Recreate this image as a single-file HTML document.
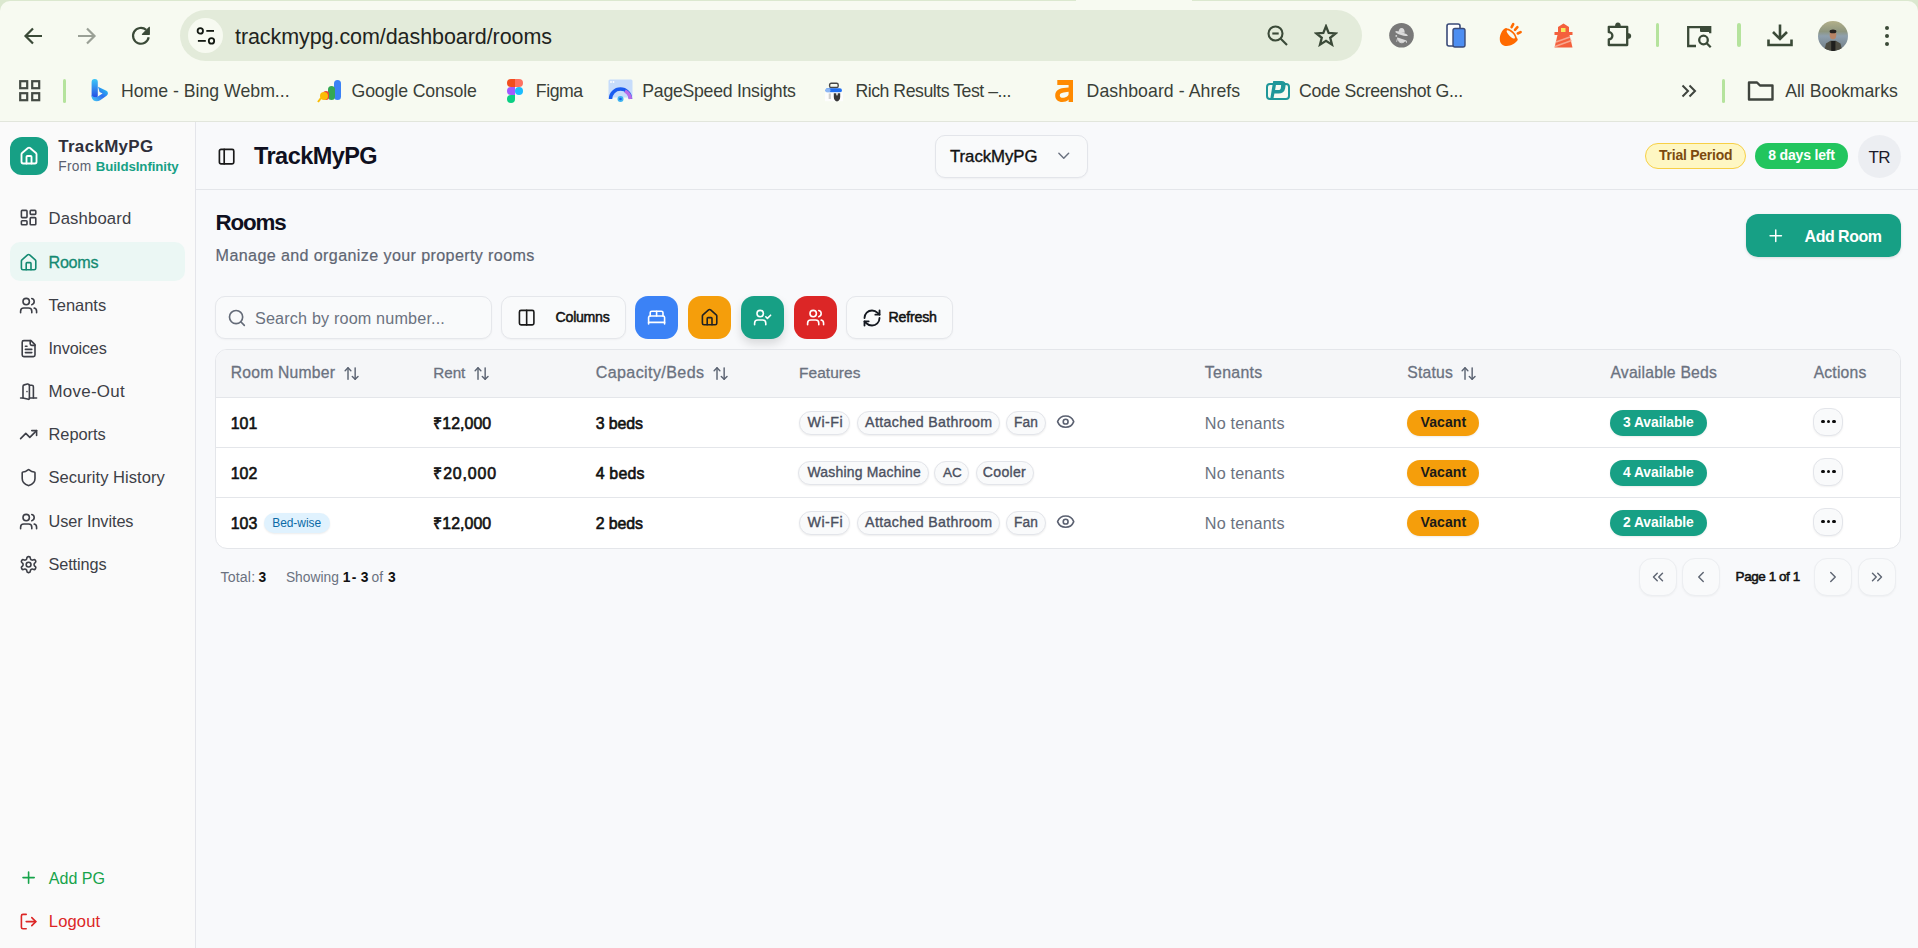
<!DOCTYPE html>
<html><head><meta charset="utf-8"><title>TrackMyPG - Rooms</title>
<style>
html,body{margin:0;padding:0;}
body{width:1918px;height:948px;position:relative;overflow:hidden;background:#f8f9fb;font-family:"Liberation Sans",sans-serif;}
.t{position:absolute;white-space:nowrap;}
svg{display:block}
</style></head><body>
<div style="position:absolute;left:0px;top:0px;width:1918px;height:122px;background:#dbe8cf;"></div>
<div style="position:absolute;left:0px;top:1px;width:1918px;height:120px;background:#f7faf1;border-radius:10px 10px 0 0;"></div>
<div style="position:absolute;left:0px;top:121px;width:1918px;height:1px;background:#e2e6dc;"></div>
<div style="position:absolute;left:1076px;top:0px;width:116px;height:1px;background:#f7faf1;"></div>
<div style="position:absolute;left:180px;top:10px;width:1182px;height:51px;background:#e3ebda;border-radius:26px;"></div>
<div style="position:absolute;left:187.6px;top:17.6px;width:35.599999999999994px;height:35.8px;background:#f7faf1;border-radius:50%;"></div>
<svg style="position:absolute;left:22px;top:25px" width="22" height="22" viewBox="0 0 22 22" fill="none" stroke="#3b4a38" stroke-width="2.2"><path d="M20 11H4M11 3.5L3.5 11 11 18.5"/></svg>
<svg style="position:absolute;left:76px;top:25px" width="22" height="22" viewBox="0 0 22 22" fill="none" stroke="#9aa096" stroke-width="2.2"><path d="M2 11h16M11 3.5L18.5 11 11 18.5"/></svg>
<svg style="position:absolute;left:130px;top:25px" width="22" height="22" viewBox="0 0 22 22"><path d="M18.7 12.3A7.9 7.9 0 1 1 16.2 4.9" fill="none" stroke="#3b4a38" stroke-width="2.2"/><path d="M19.3 2.3V9.3H12.4Z" fill="#3b4a38" stroke="#3b4a38" stroke-width="1.2" stroke-linejoin="round"/></svg>
<svg style="position:absolute;left:195px;top:25px" width="22" height="22" viewBox="0 0 22 22" fill="none" stroke="#141a13" stroke-width="1.8"><circle cx="5.3" cy="5.9" r="2.7"/><path d="M11.3 5.9H19"/><circle cx="16.5" cy="15.9" r="2.7"/><path d="M2.9 15.9H10.8"/></svg>
<div class="t" style="left:235.00px;top:27.00px;font-size:21.50px;line-height:21.50px;letter-spacing:-0.073px;color:#1f241d;">trackmypg.com/dashboard/rooms</div>
<svg style="position:absolute;left:1266px;top:24px" width="24" height="24" viewBox="0 0 24 24" fill="none" stroke="#3b4a38" stroke-width="2.1"><circle cx="9.5" cy="9.5" r="7"/><path d="M14.5 14.5L21 21"/><path d="M6.3 9.5h6.4"/></svg>
<svg style="position:absolute;left:1314px;top:24px" width="24" height="23" viewBox="0 0 26 25" fill="none" stroke="#3b4a38" stroke-width="2.5" stroke-linejoin="miter"><path d="M13 2.5l2.9 7.2 7.6.5-5.9 4.8 1.9 7.4L13 18.3l-6.5 4.1 1.9-7.4-5.9-4.8 7.6-.5z"/></svg>
<svg style="position:absolute;left:1389px;top:23px" width="25" height="25" viewBox="0 0 25 25"><circle cx="12.5" cy="12.3" r="12.3" fill="#797979"/><path d="M9.6 9.5C9.6 6.5 10.6 5 12.6 5S15.7 6.5 15.7 9.8Z" fill="#dadada"/><ellipse cx="12.5" cy="10.6" rx="6.6" ry="1.5" transform="rotate(18 12.5 10.6)" fill="#dadada"/><path d="M8.8 14.3C8.6 17.8 10.2 19.8 12.7 19.8S16.6 18 16.6 15.6L17.5 19.5 16 15.9Z M8.8 14.3L7.6 18.8" fill="#dadada" stroke="#dadada" stroke-width="0.8"/><path d="M5.2 12.2L20.2 17.2" stroke="#797979" stroke-width="2"/><circle cx="7.3" cy="12.9" r="0.9" fill="#dadada"/></svg>
<svg style="position:absolute;left:1446px;top:23px" width="20" height="25" viewBox="0 0 20 25"><rect x="1" y="1" width="13" height="22" rx="2" fill="#fff" stroke="#3a4a78" stroke-width="1.6"/><rect x="7" y="5.5" width="12" height="18.5" rx="2" fill="#4d8ef2" stroke="#3a4a78" stroke-width="1.4"/></svg>
<svg style="position:absolute;left:1494px;top:18px" width="34" height="34" viewBox="0 0 34 34"><path d="M10.8 10.6C8 12.5 5.6 17 5.8 21.5c.2 4 3 6.8 7 6.6 4.2-.2 8.5-2.5 10.6-5.5 .6-.9.3-1.6-.2-2.3L12.8 10.4c-.6-.5-1.3-.4-2 .2z" fill="#ff6a00"/><ellipse cx="16.8" cy="16.4" rx="7.6" ry="3.6" transform="rotate(45 16.8 16.4)" fill="#ff6a00"/><ellipse cx="16.8" cy="16.4" rx="5.6" ry="1.9" transform="rotate(45 16.8 16.4)" fill="#f6f9f0"/><path d="M17.6 9.2l1.6-3M21 11.8l2.4-2.6M23.8 15.5l2.8-1.4" stroke="#ff6a00" stroke-width="2.6" stroke-linecap="round"/></svg>
<svg style="position:absolute;left:1554px;top:23px" width="19" height="25" viewBox="0 0 19 25"><path d="M9.5 0.5L4 4v5h11V4z" fill="#f4603d"/><rect x="7" y="5" width="4.5" height="4" fill="#f6e85a"/><rect x="0.5" y="9" width="18" height="3" fill="#f4603d"/><path d="M3.5 12h12l3 12.5H0.5z" fill="#f4603d"/><path d="M2 19l14-5M1 23.5l16.5-6" stroke="#f7a890" stroke-width="1.6"/></svg>
<svg style="position:absolute;left:1600px;top:18px" width="40" height="34" viewBox="0 0 40 34"><path d="M8.8 8.8H27.2V27H8.8V21.4A3.6 3.6 0 0 0 8.8 14.2Z" fill="none" stroke="#3b4a38" stroke-width="2.3" stroke-linejoin="round"/><path d="M15 8.8A2.9 4.2 0 0 1 20.8 8.8Z" fill="#3b4a38"/><path d="M27.2 15A4 2.9 0 0 1 27.2 20.8Z" fill="#3b4a38"/></svg>
<div style="position:absolute;left:1656px;top:23px;width:3px;height:24px;background:#b5e39d;border-radius:2px;"></div>
<svg style="position:absolute;left:1686px;top:25px" width="27" height="23" viewBox="0 0 27 23" fill="none" stroke="#3b4a38" stroke-width="2.3"><path d="M10 21H2.2V2.2h22v6"/><rect x="14" y="1" width="11" height="6" fill="#3b4a38" stroke="none" rx="1"/><circle cx="17.5" cy="15" r="4.3"/><path d="M20.7 18.2l4 4"/></svg>
<div style="position:absolute;left:1737px;top:23px;width:3.5px;height:24px;background:#b5e39d;border-radius:2px;"></div>
<svg style="position:absolute;left:1767px;top:24px" width="26" height="24" viewBox="0 0 26 24" fill="none" stroke="#3b4a38" stroke-width="2.6"><path d="M13 0.5v14M6 8l7 7 7-7"/><path d="M1.5 15.5v5.5h23v-5.5"/></svg>
<svg style="position:absolute;left:1818px;top:21px" width="30" height="30" viewBox="0 0 30 30"><defs><clipPath id="av"><circle cx="15" cy="15" r="15"/></clipPath><linearGradient id="avg" x1="0" y1="0" x2="0" y2="1"><stop offset="0" stop-color="#b3b08a"/><stop offset="0.35" stop-color="#8e9680"/><stop offset="0.5" stop-color="#8fa0ad"/><stop offset="1" stop-color="#6d7a82"/></linearGradient></defs><g clip-path="url(#av)"><rect width="30" height="30" fill="url(#avg)"/><ellipse cx="15" cy="14" rx="3.3" ry="4.2" fill="#b88466"/><ellipse cx="15" cy="10.4" rx="3.4" ry="1.9" fill="#26221f"/><path d="M6 31L8 22.5 12.5 19.8H17.8L22.5 22.5 24.5 31Z" fill="#4d4c42"/><rect x="13.2" y="20" width="4.2" height="11" fill="#1f1f1d"/></g></svg>
<div style="position:absolute;left:1885px;top:25.6px;width:4px;height:4.0px;background:#3b4a38;border-radius:50%;"></div>
<div style="position:absolute;left:1885px;top:33.9px;width:4px;height:4.0px;background:#3b4a38;border-radius:50%;"></div>
<div style="position:absolute;left:1885px;top:42.1px;width:4px;height:4.0px;background:#3b4a38;border-radius:50%;"></div>
<svg style="position:absolute;left:19px;top:80px" width="22" height="22" viewBox="0 0 22 22" fill="none" stroke="#444b44" stroke-width="2.2"><rect x="1.2" y="1.2" width="7" height="7"/><rect x="13.2" y="1.2" width="7" height="7"/><rect x="1.2" y="13.2" width="7" height="7"/><rect x="13.2" y="13.2" width="7" height="7"/></svg>
<div style="position:absolute;left:63px;top:79px;width:3px;height:23.5px;background:#b5e39d;border-radius:2px;"></div>
<div class="t" style="left:121.00px;top:83.00px;font-size:17.70px;line-height:17.70px;letter-spacing:-0.009px;color:#3a3f38;">Home - Bing Webm...</div>
<div class="t" style="left:351.50px;top:83.00px;font-size:17.70px;line-height:17.70px;letter-spacing:-0.110px;color:#3a3f38;">Google Console</div>
<div class="t" style="left:535.80px;top:83.00px;font-size:17.70px;line-height:17.70px;letter-spacing:-0.447px;color:#3a3f38;">Figma</div>
<div class="t" style="left:642.30px;top:83.00px;font-size:17.70px;line-height:17.70px;letter-spacing:-0.278px;color:#3a3f38;">PageSpeed Insights</div>
<div class="t" style="left:855.40px;top:83.00px;font-size:17.70px;line-height:17.70px;letter-spacing:-0.468px;color:#3a3f38;">Rich Results Test –...</div>
<div class="t" style="left:1086.60px;top:83.00px;font-size:17.70px;line-height:17.70px;letter-spacing:0.070px;color:#3a3f38;">Dashboard - Ahrefs</div>
<div class="t" style="left:1299.00px;top:83.00px;font-size:17.70px;line-height:17.70px;letter-spacing:-0.316px;color:#3a3f38;">Code Screenshot G...</div>
<div class="t" style="left:1785.20px;top:83.00px;font-size:17.70px;line-height:17.70px;letter-spacing:-0.027px;color:#3a3f38;">All Bookmarks</div>
<svg style="position:absolute;left:91px;top:78px" width="18" height="26" viewBox="0 0 18 26"><defs><linearGradient id="bg1" x1="0" y1="0" x2="0" y2="1"><stop offset="0" stop-color="#3cc8f7"/><stop offset="1" stop-color="#2546e3"/></linearGradient><linearGradient id="bg2" x1="1" y1="0" x2="0" y2="1"><stop offset="0" stop-color="#22d3f0"/><stop offset="0.5" stop-color="#2f6ff0"/><stop offset="1" stop-color="#45d0f5"/></linearGradient></defs><rect x="0.6" y="1" width="6.2" height="19.5" rx="3" fill="url(#bg1)"/><path d="M7 8.8L15.4 12.8C17.4 13.8 17.5 16.6 15.6 17.8L9.2 22.2C5.6 24.6 1.2 23 0.6 19V17.2C2.3 19.3 5 19.6 7.2 18.2L11.6 15.4L8.6 14Z" fill="url(#bg2)"/></svg>
<svg style="position:absolute;left:317px;top:79px" width="26" height="24" viewBox="0 0 26 24"><rect x="17" y="1" width="7" height="20" rx="3.5" fill="#3b82f6"/><rect x="11" y="7" width="7" height="14" rx="3.5" fill="#34a853"/><rect x="6" y="12" width="6" height="9" rx="3" fill="#ea4335"/><circle cx="7" cy="17" r="4" fill="#fbbc04"/><path d="M4 19l-3 4" stroke="#fbbc04" stroke-width="2"/></svg>
<svg style="position:absolute;left:507px;top:79px" width="16" height="24" viewBox="0 0 16 24"><path d="M4 0h4v8H4a4 4 0 0 1 0-8z" fill="#f24e1e"/><path d="M8 0h4a4 4 0 0 1 0 8H8z" fill="#ff7262"/><path d="M4 8h4v8H4a4 4 0 0 1 0-8z" fill="#a259ff"/><circle cx="12" cy="12" r="4" fill="#1abcfe"/><path d="M4 16h4v4a4 4 0 1 1-4-4z" fill="#0acf83"/></svg>
<svg style="position:absolute;left:608px;top:79px" width="25" height="24" viewBox="0 0 25 24"><rect x="0.5" y="0.5" width="24" height="18" rx="1.5" fill="#c6dcfb"/><circle cx="3" cy="3" r="0.9" fill="#fff"/><circle cx="5.5" cy="3" r="0.9" fill="#fff"/><path d="M2.5 20a10 10 0 0 1 20 0" fill="none" stroke="#1a5cf0" stroke-width="3.5"/><path d="M17 12a10 10 0 0 1 5.5 8" fill="none" stroke="#b76be8" stroke-width="3.5"/><circle cx="12.5" cy="20" r="3" fill="#3fb4f0"/><circle cx="12.5" cy="20" r="1.3" fill="#1a5cf0"/></svg>
<svg style="position:absolute;left:824px;top:82px" width="20" height="20" viewBox="0 0 20 20"><rect x="5.6" y="1.3" width="8.6" height="4.2" rx="1.6" fill="none" stroke="#474747" stroke-width="1.4"/><rect x="1.5" y="6.2" width="16.4" height="4.2" rx="2" fill="#1f6ff2"/><rect x="1.5" y="6.2" width="5" height="4.2" rx="2" fill="#8cb6f4"/><rect x="1" y="10.4" width="18" height="8.8" fill="#fdfdfd"/><rect x="4.7" y="11.4" width="2.2" height="5.6" fill="#cfcfcf"/><path d="M9.8 11.3h6.4v3.6c0 2.4-1.4 4-3.2 4.5-1.8-.5-3.2-2.1-3.2-4.5z" fill="#383838"/><path d="M11.8 11.3l1.2 2.6 1.2-2.6z" fill="#fdfdfd"/></svg>
<svg style="position:absolute;left:1055px;top:80px" width="19" height="22" viewBox="0 0 19 22"><path d="M2.3 0H18V22H13.6V19.6C12 21.4 9.8 22 7.3 22 3 22 .2 19.5.2 15.5.2 11 3.5 8.6 8.5 8.1L13.6 7.4V4.9H2.3Z M13.6 11.8L8.6 12.5C6 12.9 4.8 13.8 4.8 15.4 4.8 16.9 6 17.8 7.8 17.8 10.8 17.8 13.6 16 13.6 14Z" fill="#ff8a00" fill-rule="evenodd"/></svg>
<svg style="position:absolute;left:1266px;top:81px" width="24" height="19" viewBox="0 0 24 19"><rect x="1" y="3" width="22" height="15" rx="3" fill="none" stroke="#1f9799" stroke-width="2"/><path d="M7.2 0H15.5C18.6 0 20.1 1.6 19.6 4.6L19.1 7.4C18.5 10.7 16.1 12.6 12.6 12.6H8.4L7.2 18.8H4.1Z M9.1 9H12.6C13.8 9 14.6 8.4 14.8 7.2L15.1 5.3C15.3 4.2 14.9 3.6 13.9 3.6H10Z" fill="#1f9799" fill-rule="evenodd"/></svg>
<svg style="position:absolute;left:1681px;top:84px" width="16" height="14" viewBox="0 0 16 14" fill="none" stroke="#3f443e" stroke-width="2"><path d="M1.5 1.5l5.5 5.5-5.5 5.5M8.5 1.5L14 7l-5.5 5.5"/></svg>
<div style="position:absolute;left:1722px;top:79px;width:3.2999999999999545px;height:23.700000000000003px;background:#b5e39d;border-radius:2px;"></div>
<svg style="position:absolute;left:1747px;top:80px" width="28" height="22" viewBox="0 0 28 22" fill="none" stroke="#3f443e" stroke-width="2.4" stroke-linejoin="round"><path d="M2 2.5h8l3 3h12.5v14H2z"/></svg>
<div style="position:absolute;left:0px;top:122px;width:195px;height:826px;background:#fafafa;"></div>
<div style="position:absolute;left:195px;top:122px;width:1px;height:826px;background:#e4e5ea;"></div>
<div style="position:absolute;left:196px;top:122px;width:1722px;height:826px;background:#f8f9fb;"></div>
<div style="position:absolute;left:196px;top:189px;width:1722px;height:1px;background:#e4e6ea;"></div>
<div style="position:absolute;left:10px;top:137px;width:38px;height:38px;background:#17a085;border-radius:12px;"></div>
<svg style="position:absolute;left:18.63px;top:145.93px;" width="20.04" height="20.04" viewBox="0 0 24 24" fill="none" stroke="#fff" stroke-width="2.2" stroke-linecap="round" stroke-linejoin="round"><path d="M15 21v-8a1 1 0 0 0-1-1h-4a1 1 0 0 0-1 1v8"/><path d="M3 10a2 2 0 0 1 .709-1.528l7-5.999a2 2 0 0 1 2.582 0l7 5.999A2 2 0 0 1 21 10v9a2 2 0 0 1-2 2H5a2 2 0 0 1-2-2z"/></svg>
<div class="t" style="left:58.20px;top:139.00px;font-size:16.97px;line-height:16.97px;letter-spacing:0.333px;color:#2f2f3a;font-weight:700;">TrackMyPG</div>
<div class="t" style="left:58.20px;top:160.00px;font-size:13.78px;line-height:13.78px;letter-spacing:0.287px;color:#5b6170;">From</div>
<div class="t" style="left:95.70px;top:160.00px;font-size:13.26px;line-height:13.26px;letter-spacing:-0.070px;color:#17a085;font-weight:700;">BuildsInfinity</div>
<div style="position:absolute;left:10px;top:242px;width:175px;height:39px;background:#ebf7f4;border-radius:10px;"></div>
<div class="t" style="left:48.50px;top:211.00px;font-size:16.70px;line-height:16.70px;letter-spacing:0.136px;color:#3d3f47;">Dashboard</div>
<svg style="position:absolute;left:19.0px;top:208.4px;" width="19.2" height="19.2" viewBox="0 0 24 24" fill="none" stroke="#3d3f47" stroke-width="2" stroke-linecap="round" stroke-linejoin="round"><rect width="7" height="9" x="3" y="3" rx="1"/><rect width="7" height="5" x="14" y="3" rx="1"/><rect width="7" height="9" x="14" y="12" rx="1"/><rect width="7" height="5" x="3" y="16" rx="1"/></svg>
<div class="t" style="left:48.50px;top:254.00px;font-size:16.15px;line-height:16.15px;letter-spacing:-0.264px;color:#148a72;-webkit-text-stroke:0.3px #148a72;">Rooms</div>
<svg style="position:absolute;left:19.0px;top:252.50000000000003px;" width="19.2" height="19.2" viewBox="0 0 24 24" fill="none" stroke="#148a72" stroke-width="2" stroke-linecap="round" stroke-linejoin="round"><path d="M15 21v-8a1 1 0 0 0-1-1h-4a1 1 0 0 0-1 1v8"/><path d="M3 10a2 2 0 0 1 .709-1.528l7-5.999a2 2 0 0 1 2.582 0l7 5.999A2 2 0 0 1 21 10v9a2 2 0 0 1-2 2H5a2 2 0 0 1-2-2z"/></svg>
<div class="t" style="left:48.50px;top:297.00px;font-size:16.48px;line-height:16.48px;letter-spacing:-0.001px;color:#3d3f47;">Tenants</div>
<svg style="position:absolute;left:19.0px;top:295.59999999999997px;" width="19.2" height="19.2" viewBox="0 0 24 24" fill="none" stroke="#3d3f47" stroke-width="2" stroke-linecap="round" stroke-linejoin="round"><path d="M16 21v-2a4 4 0 0 0-4-4H6a4 4 0 0 0-4 4v2"/><path d="M16 3.128a4 4 0 0 1 0 7.744"/><path d="M22 21v-2a4 4 0 0 0-3-3.87"/><circle cx="9" cy="7" r="4"/></svg>
<div class="t" style="left:48.50px;top:340.00px;font-size:16.19px;line-height:16.19px;letter-spacing:-0.154px;color:#3d3f47;">Invoices</div>
<svg style="position:absolute;left:19.0px;top:338.59999999999997px;" width="19.2" height="19.2" viewBox="0 0 24 24" fill="none" stroke="#3d3f47" stroke-width="2" stroke-linecap="round" stroke-linejoin="round"><path d="M15 2H6a2 2 0 0 0-2 2v16a2 2 0 0 0 2 2h12a2 2 0 0 0 2-2V7Z"/><path d="M14 2v4a2 2 0 0 0 2 2h4"/><path d="M10 9H8"/><path d="M16 13H8"/><path d="M16 17H8"/></svg>
<div class="t" style="left:48.50px;top:384.00px;font-size:16.91px;line-height:16.91px;letter-spacing:0.268px;color:#3d3f47;">Move-Out</div>
<svg style="position:absolute;left:19.0px;top:381.7px;" width="19.2" height="19.2" viewBox="0 0 24 24" fill="none" stroke="#3d3f47" stroke-width="2" stroke-linecap="round" stroke-linejoin="round"><path d="M13 4h3a2 2 0 0 1 2 2v14"/><path d="M2 20h3"/><path d="M13 20h9"/><path d="M10 12v.01"/><path d="M13 4.562v16.157a1 1 0 0 1-1.242.97L5 20V5.562a2 2 0 0 1 1.515-1.94l4-1A2 2 0 0 1 13 4.561Z"/></svg>
<div class="t" style="left:48.50px;top:426.00px;font-size:16.42px;line-height:16.42px;letter-spacing:-0.033px;color:#3d3f47;">Reports</div>
<svg style="position:absolute;left:19.0px;top:424.7px;" width="19.2" height="19.2" viewBox="0 0 24 24" fill="none" stroke="#3d3f47" stroke-width="2" stroke-linecap="round" stroke-linejoin="round"><polyline points="22 7 13.5 15.5 8.5 10.5 2 17"/><polyline points="16 7 22 7 22 13"/></svg>
<div class="t" style="left:48.50px;top:470.00px;font-size:16.54px;line-height:16.54px;letter-spacing:0.030px;color:#3d3f47;">Security History</div>
<svg style="position:absolute;left:19.0px;top:467.7px;" width="19.2" height="19.2" viewBox="0 0 24 24" fill="none" stroke="#3d3f47" stroke-width="2" stroke-linecap="round" stroke-linejoin="round"><path d="M20 13c0 5-3.5 7.5-7.66 8.95a1 1 0 0 1-.67-.01C7.5 20.5 4 18 4 13V6a1 1 0 0 1 1-1c2 0 4.5-1.2 6.24-2.72a1.17 1.17 0 0 1 1.52 0C14.51 3.81 17 5 19 5a1 1 0 0 1 1 1z"/></svg>
<div class="t" style="left:48.50px;top:513.00px;font-size:16.30px;line-height:16.30px;letter-spacing:-0.086px;color:#3d3f47;">User Invites</div>
<svg style="position:absolute;left:19.0px;top:511.69999999999993px;" width="19.2" height="19.2" viewBox="0 0 24 24" fill="none" stroke="#3d3f47" stroke-width="2" stroke-linecap="round" stroke-linejoin="round"><path d="M16 21v-2a4 4 0 0 0-4-4H6a4 4 0 0 0-4 4v2"/><path d="M16 3.128a4 4 0 0 1 0 7.744"/><path d="M22 21v-2a4 4 0 0 0-3-3.87"/><circle cx="9" cy="7" r="4"/></svg>
<div class="t" style="left:48.50px;top:556.00px;font-size:16.28px;line-height:16.28px;letter-spacing:-0.103px;color:#3d3f47;">Settings</div>
<svg style="position:absolute;left:19.0px;top:554.6999999999999px;" width="19.2" height="19.2" viewBox="0 0 24 24" fill="none" stroke="#3d3f47" stroke-width="2" stroke-linecap="round" stroke-linejoin="round"><path d="M12.22 2h-.44a2 2 0 0 0-2 2v.18a2 2 0 0 1-1 1.73l-.43.25a2 2 0 0 1-2 0l-.15-.08a2 2 0 0 0-2.73.73l-.22.38a2 2 0 0 0 .73 2.73l.15.1a2 2 0 0 1 1 1.72v.51a2 2 0 0 1-1 1.74l-.15.09a2 2 0 0 0-.73 2.73l.22.38a2 2 0 0 0 2.73.73l.15-.08a2 2 0 0 1 2 0l.43.25a2 2 0 0 1 1 1.73V20a2 2 0 0 0 2 2h.44a2 2 0 0 0 2-2v-.18a2 2 0 0 1 1-1.73l.43-.25a2 2 0 0 1 2 0l.15.08a2 2 0 0 0 2.73-.73l.22-.39a2 2 0 0 0-.73-2.730l-.15-.08a2 2 0 0 1-1-1.74v-.5a2 2 0 0 1 1-1.74l.15-.09a2 2 0 0 0 .73-2.73l-.22-.38a2 2 0 0 0-2.73-.73l-.15.08a2 2 0 0 1-2 0l-.43-.25a2 2 0 0 1-1-1.73V4a2 2 0 0 0-2-2z"/><circle cx="12" cy="12" r="3"/></svg>
<svg style="position:absolute;left:18.85px;top:867.9px;" width="19.2" height="19.2" viewBox="0 0 24 24" fill="none" stroke="#16a34a" stroke-width="2" stroke-linecap="round" stroke-linejoin="round"><path d="M5 12h14"/><path d="M12 5v14"/></svg>
<div class="t" style="left:48.80px;top:870.00px;font-size:16.07px;line-height:16.07px;letter-spacing:0.005px;color:#16a34a;">Add PG</div>
<svg style="position:absolute;left:19.200000000000003px;top:911.75px;" width="19.2" height="19.2" viewBox="0 0 24 24" fill="none" stroke="#dc2626" stroke-width="2" stroke-linecap="round" stroke-linejoin="round"><path d="M9 21H5a2 2 0 0 1-2-2V5a2 2 0 0 1 2-2h4"/><polyline points="16 17 21 12 16 7"/><line x1="21" x2="9" y1="12" y2="12"/></svg>
<div class="t" style="left:48.80px;top:914.00px;font-size:16.56px;line-height:16.56px;letter-spacing:0.131px;color:#dc2626;">Logout</div>
<svg style="position:absolute;left:217.4px;top:147.2px;" width="19.2" height="19.2" viewBox="0 0 24 24" fill="none" stroke="#1a1a1a" stroke-width="2.1" stroke-linecap="round" stroke-linejoin="round"><rect width="18" height="18" x="3" y="3" rx="2"/><path d="M9 3v18"/></svg>
<div class="t" style="left:254.00px;top:145.00px;font-size:23.50px;line-height:23.50px;letter-spacing:-0.548px;color:#0f1020;font-weight:700;">TrackMyPG</div>
<div style="position:absolute;left:935px;top:135px;width:153px;height:43px;background:#f9fafb;border:1px solid #e3e5ea;border-radius:10px;box-sizing:border-box;box-shadow:0 1px 2px rgba(0,0,0,.04);"></div>
<div class="t" style="left:950.00px;top:149.00px;font-size:16.81px;line-height:16.81px;letter-spacing:-0.061px;color:#111;-webkit-text-stroke:0.35px #111;">TrackMyPG</div>
<svg style="position:absolute;left:1053.83px;top:146.49px;" width="19.54" height="19.54" viewBox="0 0 24 24" fill="none" stroke="#6b7280" stroke-width="1.8" stroke-linecap="round" stroke-linejoin="round"><path d="m6 9 6 6 6-6"/></svg>
<div style="position:absolute;left:1645px;top:143px;width:101px;height:26px;background:#fef7c3;border:1px solid #f7d046;border-radius:13px;box-sizing:border-box;"></div>
<div class="t" style="left:1659.00px;top:149.00px;font-size:13.94px;line-height:13.94px;letter-spacing:-0.220px;color:#7c4a0f;font-weight:700;">Trial Period</div>
<div style="position:absolute;left:1755px;top:143px;width:93px;height:26px;background:#22c55e;border-radius:13px;"></div>
<div class="t" style="left:1768.30px;top:148.00px;font-size:14.01px;line-height:14.01px;letter-spacing:-0.183px;color:#fff;font-weight:700;">8 days left</div>
<div style="position:absolute;left:1858px;top:135px;width:43px;height:43px;background:#eceef2;border-radius:50%;"></div>
<div class="t" style="left:1868.40px;top:149.00px;font-size:17.06px;line-height:17.06px;letter-spacing:-0.536px;color:#1b1b2a;">TR</div>
<div class="t" style="left:215.60px;top:212.00px;font-size:22.35px;line-height:22.35px;letter-spacing:-1.183px;color:#0f1020;font-weight:700;">Rooms</div>
<div class="t" style="left:215.60px;top:247.00px;font-size:16.12px;line-height:16.12px;letter-spacing:0.377px;color:#5f6673;-webkit-text-stroke:0.2px #5f6673;">Manage and organize your property rooms</div>
<div style="position:absolute;left:1746px;top:214px;width:155px;height:43px;background:#17a085;border-radius:12px;box-shadow:0 1px 3px rgba(0,0,0,.12);"></div>
<svg style="position:absolute;left:1765.75px;top:225.75px;" width="19.5" height="19.5" viewBox="0 0 24 24" fill="none" stroke="#fff" stroke-width="1.8" stroke-linecap="round" stroke-linejoin="round"><path d="M5 12h14"/><path d="M12 5v14"/></svg>
<div class="t" style="left:1804.60px;top:229.00px;font-size:15.96px;line-height:15.96px;letter-spacing:-0.480px;color:#fff;font-weight:700;">Add Room</div>
<div style="position:absolute;left:215px;top:296px;width:277px;height:43px;background:#f9fafb;border:1px solid #e5e7eb;border-radius:10px;box-sizing:border-box;box-shadow:0 1px 2px rgba(0,0,0,.04);"></div>
<svg style="position:absolute;left:226.85px;top:308.15px;" width="19.8" height="19.8" viewBox="0 0 24 24" fill="none" stroke="#646b78" stroke-width="2" stroke-linecap="round" stroke-linejoin="round"><circle cx="11" cy="11" r="8"/><path d="m21 21-4.3-4.3"/></svg>
<div class="t" style="left:255.00px;top:310.00px;font-size:16.22px;line-height:16.22px;letter-spacing:0.148px;color:#6b7280;">Search by room number...</div>
<div style="position:absolute;left:501px;top:296px;width:125px;height:43px;background:#f9fafb;border:1px solid #e5e7eb;border-radius:10px;box-sizing:border-box;box-shadow:0 1px 2px rgba(0,0,0,.04);"></div>
<svg style="position:absolute;left:517.09px;top:308.29px;" width="19.32" height="19.32" viewBox="0 0 24 24" fill="none" stroke="#1a1a1a" stroke-width="2" stroke-linecap="round" stroke-linejoin="round"><rect width="18" height="18" x="3" y="3" rx="2"/><path d="M12 3v18"/></svg>
<div class="t" style="left:555.60px;top:310.00px;font-size:14.13px;line-height:14.13px;letter-spacing:-0.260px;color:#111;-webkit-text-stroke:0.5px #111;">Columns</div>
<div style="position:absolute;left:635px;top:296px;width:43px;height:43px;background:#3b82f6;border-radius:13px;"></div>
<svg style="position:absolute;left:646.9px;top:307.9px;" width="19.2" height="19.2" viewBox="0 0 24 24" fill="none" stroke="#fff" stroke-width="2" stroke-linecap="round" stroke-linejoin="round"><path d="M2 20v-8a2 2 0 0 1 2-2h16a2 2 0 0 1 2 2v8"/><path d="M4 10V6a2 2 0 0 1 2-2h12a2 2 0 0 1 2 2v4"/><path d="M12 4v6"/><path d="M2 18h20"/></svg>
<div style="position:absolute;left:688px;top:296px;width:43px;height:43px;background:#f59e0b;border-radius:13px;"></div>
<svg style="position:absolute;left:699.9px;top:307.9px;" width="19.2" height="19.2" viewBox="0 0 24 24" fill="none" stroke="#222" stroke-width="2" stroke-linecap="round" stroke-linejoin="round"><path d="M15 21v-8a1 1 0 0 0-1-1h-4a1 1 0 0 0-1 1v8"/><path d="M3 10a2 2 0 0 1 .709-1.528l7-5.999a2 2 0 0 1 2.582 0l7 5.999A2 2 0 0 1 21 10v9a2 2 0 0 1-2 2H5a2 2 0 0 1-2-2z"/></svg>
<div style="position:absolute;left:741px;top:296px;width:43px;height:43px;background:#17a085;border-radius:13px;box-shadow:0 5px 10px rgba(0,0,0,.13);"></div>
<svg style="position:absolute;left:752.9px;top:307.9px;" width="19.2" height="19.2" viewBox="0 0 24 24" fill="none" stroke="#fff" stroke-width="2" stroke-linecap="round" stroke-linejoin="round"><path d="M16 21v-2a4 4 0 0 0-4-4H6a4 4 0 0 0-4 4v2"/><circle cx="9" cy="7" r="4"/><polyline points="16 11 18 13 22 9"/></svg>
<div style="position:absolute;left:794px;top:296px;width:43px;height:43px;background:#dc2626;border-radius:13px;"></div>
<svg style="position:absolute;left:805.9px;top:307.9px;" width="19.2" height="19.2" viewBox="0 0 24 24" fill="none" stroke="#fff" stroke-width="2" stroke-linecap="round" stroke-linejoin="round"><path d="M16 21v-2a4 4 0 0 0-4-4H6a4 4 0 0 0-4 4v2"/><path d="M16 3.128a4 4 0 0 1 0 7.744"/><path d="M22 21v-2a4 4 0 0 0-3-3.87"/><circle cx="9" cy="7" r="4"/></svg>
<div style="position:absolute;left:846px;top:296px;width:107px;height:43px;background:#f9fafb;border:1px solid #e5e7eb;border-radius:10px;box-sizing:border-box;box-shadow:0 1px 2px rgba(0,0,0,.04);"></div>
<svg style="position:absolute;left:861.63px;top:307.93px;" width="20.04" height="20.04" viewBox="0 0 24 24" fill="none" stroke="#141820" stroke-width="2.2" stroke-linecap="round" stroke-linejoin="round"><path d="M3 12a9 9 0 0 1 9-9 9.75 9.75 0 0 1 6.74 2.74L21 8"/><path d="M21 3v5h-5"/><path d="M21 12a9 9 0 0 1-9 9 9.75 9.75 0 0 1-6.74-2.74L3 16"/><path d="M8 16H3v5"/></svg>
<div class="t" style="left:888.50px;top:310.00px;font-size:14.19px;line-height:14.19px;letter-spacing:-0.196px;color:#111;-webkit-text-stroke:0.5px #111;">Refresh</div>
<div style="position:absolute;left:215px;top:349px;width:1686px;height:200px;border:1px solid #e4e6ea;border-radius:12px;box-sizing:border-box;background:#fff;overflow:hidden;"><div style="position:absolute;left:0;top:0;right:0;height:47px;background:#f5f6f8;border-bottom:1px solid #e4e6ea;"></div><div style="position:absolute;left:0;top:97px;right:0;height:1px;background:#e4e6ea"></div><div style="position:absolute;left:0;top:147px;right:0;height:1px;background:#e4e6ea"></div></div>
<div class="t" style="left:230.70px;top:365.00px;font-size:15.70px;line-height:15.70px;letter-spacing:0.220px;color:#6b7280;-webkit-text-stroke:0.3px #6b7280;">Room Number</div>
<svg style="position:absolute;left:342.77px;top:365.25px;" width="17.16" height="17.16" viewBox="0 0 24 24" fill="none" stroke="#5b6372" stroke-width="2" stroke-linecap="round" stroke-linejoin="round"><path d="m21 16-4 4-4-4"/><path d="M17 20V4"/><path d="m3 8 4-4 4 4"/><path d="M7 4v16"/></svg>
<div class="t" style="left:433.30px;top:365.00px;font-size:15.26px;line-height:15.26px;letter-spacing:-0.074px;color:#6b7280;-webkit-text-stroke:0.3px #6b7280;">Rent</div>
<svg style="position:absolute;left:472.87px;top:365.25px;" width="17.16" height="17.16" viewBox="0 0 24 24" fill="none" stroke="#5b6372" stroke-width="2" stroke-linecap="round" stroke-linejoin="round"><path d="m21 16-4 4-4-4"/><path d="M17 20V4"/><path d="m3 8 4-4 4 4"/><path d="M7 4v16"/></svg>
<div class="t" style="left:595.70px;top:364.00px;font-size:16.09px;line-height:16.09px;letter-spacing:0.389px;color:#6b7280;-webkit-text-stroke:0.3px #6b7280;">Capacity/Beds</div>
<svg style="position:absolute;left:711.87px;top:365.25px;" width="17.16" height="17.16" viewBox="0 0 24 24" fill="none" stroke="#5b6372" stroke-width="2" stroke-linecap="round" stroke-linejoin="round"><path d="m21 16-4 4-4-4"/><path d="M17 20V4"/><path d="m3 8 4-4 4 4"/><path d="M7 4v16"/></svg>
<div class="t" style="left:799.00px;top:365.00px;font-size:15.47px;line-height:15.47px;letter-spacing:0.063px;color:#6b7280;-webkit-text-stroke:0.3px #6b7280;">Features</div>
<div class="t" style="left:1204.80px;top:365.00px;font-size:15.88px;line-height:15.88px;letter-spacing:0.300px;color:#6b7280;-webkit-text-stroke:0.3px #6b7280;">Tenants</div>
<div class="t" style="left:1407.30px;top:365.00px;font-size:15.72px;line-height:15.72px;letter-spacing:0.205px;color:#6b7280;-webkit-text-stroke:0.3px #6b7280;">Status</div>
<svg style="position:absolute;left:1459.77px;top:365.25px;" width="17.16" height="17.16" viewBox="0 0 24 24" fill="none" stroke="#5b6372" stroke-width="2" stroke-linecap="round" stroke-linejoin="round"><path d="m21 16-4 4-4-4"/><path d="M17 20V4"/><path d="m3 8 4-4 4 4"/><path d="M7 4v16"/></svg>
<div class="t" style="left:1610.40px;top:365.00px;font-size:15.75px;line-height:15.75px;letter-spacing:0.198px;color:#6b7280;-webkit-text-stroke:0.3px #6b7280;">Available Beds</div>
<div class="t" style="left:1813.70px;top:365.00px;font-size:15.70px;line-height:15.70px;letter-spacing:0.185px;color:#6b7280;-webkit-text-stroke:0.3px #6b7280;">Actions</div>
<div class="t" style="left:230.70px;top:416.00px;font-size:15.92px;line-height:15.92px;letter-spacing:0.000px;color:#111;-webkit-text-stroke:0.6px #111;">101</div>
<div class="t" style="left:433.30px;top:416.00px;font-size:15.92px;line-height:15.92px;letter-spacing:0.042px;color:#111;-webkit-text-stroke:0.6px #111;">₹12,000</div>
<div class="t" style="left:595.70px;top:416.00px;font-size:15.92px;line-height:15.92px;letter-spacing:-0.079px;color:#111;-webkit-text-stroke:0.6px #111;">3 beds</div>
<div style="position:absolute;left:798.5px;top:411.4px;width:51.299999999999955px;height:23.5px;background:#f9fafb;border:1px solid #e3e5ea;border-radius:12px;box-sizing:border-box;box-shadow:0 1px 2px rgba(0,0,0,.07);"></div>
<div class="t" style="left:807.60px;top:415.00px;font-size:14.28px;line-height:14.28px;letter-spacing:0.426px;color:#4b5060;-webkit-text-stroke:0.35px #4b5060;">Wi-Fi</div>
<div style="position:absolute;left:856.6px;top:411.4px;width:143.19999999999993px;height:23.5px;background:#f9fafb;border:1px solid #e3e5ea;border-radius:12px;box-sizing:border-box;box-shadow:0 1px 2px rgba(0,0,0,.07);"></div>
<div class="t" style="left:865.10px;top:415.00px;font-size:14.20px;line-height:14.20px;letter-spacing:0.347px;color:#4b5060;-webkit-text-stroke:0.35px #4b5060;">Attached Bathroom</div>
<div style="position:absolute;left:1006px;top:411.4px;width:40px;height:23.5px;background:#f9fafb;border:1px solid #e3e5ea;border-radius:12px;box-sizing:border-box;box-shadow:0 1px 2px rgba(0,0,0,.07);"></div>
<div class="t" style="left:1014.10px;top:416.00px;font-size:13.71px;line-height:13.71px;letter-spacing:0.139px;color:#4b5060;-webkit-text-stroke:0.35px #4b5060;">Fan</div>
<svg style="position:absolute;left:1056.0px;top:412.36px;" width="19.31" height="19.31" viewBox="0 0 24 24" fill="none" stroke="#5a6070" stroke-width="2" stroke-linecap="round" stroke-linejoin="round"><path d="M2.062 12.348a1 1 0 0 1 0-.696 10.75 10.75 0 0 1 19.876 0 1 1 0 0 1 0 .696 10.75 10.75 0 0 1-19.876 0"/><circle cx="12" cy="12" r="3"/></svg>
<div class="t" style="left:1204.80px;top:415.00px;font-size:16.21px;line-height:16.21px;letter-spacing:0.156px;color:#6b7280;">No tenants</div>
<div style="position:absolute;left:1407px;top:410px;width:72px;height:25.69999999999999px;background:#f59e0b;border-radius:13px;box-shadow:0 1px 2px rgba(0,0,0,.08);"></div>
<div class="t" style="left:1420.60px;top:415.00px;font-size:14.04px;line-height:14.04px;letter-spacing:0.047px;color:#1a1a1a;font-weight:700;">Vacant</div>
<div style="position:absolute;left:1610px;top:410px;width:97px;height:26px;background:#17a085;border-radius:13px;box-shadow:0 1px 2px rgba(0,0,0,.08);"></div>
<div class="t" style="left:1623.00px;top:416.00px;font-size:13.86px;line-height:13.86px;letter-spacing:-0.057px;color:#fff;font-weight:700;">3 Available</div>
<div style="position:absolute;left:1813px;top:408px;width:30px;height:27.5px;background:#f9fafb;border:1px solid #e3e5ea;border-radius:12px;box-sizing:border-box;box-shadow:0 1px 2px rgba(0,0,0,.06);"></div>
<div style="position:absolute;left:1821.2px;top:419.7px;width:3.599999999999909px;height:3.6000000000000227px;background:#0a0a0a;border-radius:50%;"></div>
<div style="position:absolute;left:1826.7px;top:419.7px;width:3.599999999999909px;height:3.6000000000000227px;background:#0a0a0a;border-radius:50%;"></div>
<div style="position:absolute;left:1832.4px;top:419.7px;width:3.599999999999909px;height:3.6000000000000227px;background:#0a0a0a;border-radius:50%;"></div>
<div class="t" style="left:230.70px;top:466.00px;font-size:15.92px;line-height:15.92px;letter-spacing:0.000px;color:#111;-webkit-text-stroke:0.6px #111;">102</div>
<div class="t" style="left:433.30px;top:466.00px;font-size:15.92px;line-height:15.92px;letter-spacing:0.842px;color:#111;-webkit-text-stroke:0.6px #111;">₹20,000</div>
<div class="t" style="left:595.70px;top:466.00px;font-size:15.92px;line-height:15.92px;letter-spacing:0.201px;color:#111;-webkit-text-stroke:0.6px #111;">4 beds</div>
<div style="position:absolute;left:798.2px;top:461.4px;width:130.39999999999998px;height:23.5px;background:#f9fafb;border:1px solid #e3e5ea;border-radius:12px;box-sizing:border-box;box-shadow:0 1px 2px rgba(0,0,0,.07);"></div>
<div class="t" style="left:807.40px;top:466.00px;font-size:13.94px;line-height:13.94px;letter-spacing:0.222px;color:#4b5060;-webkit-text-stroke:0.35px #4b5060;">Washing Machine</div>
<div style="position:absolute;left:934.3px;top:461.4px;width:35.200000000000045px;height:23.5px;background:#f9fafb;border:1px solid #e3e5ea;border-radius:12px;box-sizing:border-box;box-shadow:0 1px 2px rgba(0,0,0,.07);"></div>
<div class="t" style="left:943.00px;top:466.00px;font-size:13.51px;line-height:13.51px;letter-spacing:-0.059px;color:#4b5060;-webkit-text-stroke:0.35px #4b5060;">AC</div>
<div style="position:absolute;left:975.5px;top:461.4px;width:58.700000000000045px;height:23.5px;background:#f9fafb;border:1px solid #e3e5ea;border-radius:12px;box-sizing:border-box;box-shadow:0 1px 2px rgba(0,0,0,.07);"></div>
<div class="t" style="left:982.80px;top:465.00px;font-size:14.07px;line-height:14.07px;letter-spacing:0.309px;color:#4b5060;-webkit-text-stroke:0.35px #4b5060;">Cooler</div>
<div class="t" style="left:1204.80px;top:465.00px;font-size:16.21px;line-height:16.21px;letter-spacing:0.156px;color:#6b7280;">No tenants</div>
<div style="position:absolute;left:1407px;top:460px;width:72px;height:25.69999999999999px;background:#f59e0b;border-radius:13px;box-shadow:0 1px 2px rgba(0,0,0,.08);"></div>
<div class="t" style="left:1420.60px;top:465.00px;font-size:14.04px;line-height:14.04px;letter-spacing:0.047px;color:#1a1a1a;font-weight:700;">Vacant</div>
<div style="position:absolute;left:1610px;top:460px;width:97px;height:26px;background:#17a085;border-radius:13px;box-shadow:0 1px 2px rgba(0,0,0,.08);"></div>
<div class="t" style="left:1623.00px;top:466.00px;font-size:13.86px;line-height:13.86px;letter-spacing:-0.057px;color:#fff;font-weight:700;">4 Available</div>
<div style="position:absolute;left:1813px;top:458px;width:30px;height:27.5px;background:#f9fafb;border:1px solid #e3e5ea;border-radius:12px;box-sizing:border-box;box-shadow:0 1px 2px rgba(0,0,0,.06);"></div>
<div style="position:absolute;left:1821.2px;top:469.7px;width:3.599999999999909px;height:3.6000000000000227px;background:#0a0a0a;border-radius:50%;"></div>
<div style="position:absolute;left:1826.7px;top:469.7px;width:3.599999999999909px;height:3.6000000000000227px;background:#0a0a0a;border-radius:50%;"></div>
<div style="position:absolute;left:1832.4px;top:469.7px;width:3.599999999999909px;height:3.6000000000000227px;background:#0a0a0a;border-radius:50%;"></div>
<div class="t" style="left:230.70px;top:516.00px;font-size:15.92px;line-height:15.92px;letter-spacing:0.000px;color:#111;-webkit-text-stroke:0.6px #111;">103</div>
<div class="t" style="left:433.30px;top:516.00px;font-size:15.92px;line-height:15.92px;letter-spacing:0.042px;color:#111;-webkit-text-stroke:0.6px #111;">₹12,000</div>
<div class="t" style="left:595.70px;top:516.00px;font-size:15.92px;line-height:15.92px;letter-spacing:-0.079px;color:#111;-webkit-text-stroke:0.6px #111;">2 beds</div>
<div style="position:absolute;left:798.5px;top:511.4px;width:51.299999999999955px;height:23.5px;background:#f9fafb;border:1px solid #e3e5ea;border-radius:12px;box-sizing:border-box;box-shadow:0 1px 2px rgba(0,0,0,.07);"></div>
<div class="t" style="left:807.60px;top:515.00px;font-size:14.28px;line-height:14.28px;letter-spacing:0.426px;color:#4b5060;-webkit-text-stroke:0.35px #4b5060;">Wi-Fi</div>
<div style="position:absolute;left:856.6px;top:511.4px;width:143.19999999999993px;height:23.5px;background:#f9fafb;border:1px solid #e3e5ea;border-radius:12px;box-sizing:border-box;box-shadow:0 1px 2px rgba(0,0,0,.07);"></div>
<div class="t" style="left:865.10px;top:515.00px;font-size:14.20px;line-height:14.20px;letter-spacing:0.347px;color:#4b5060;-webkit-text-stroke:0.35px #4b5060;">Attached Bathroom</div>
<div style="position:absolute;left:1006px;top:511.4px;width:40px;height:23.5px;background:#f9fafb;border:1px solid #e3e5ea;border-radius:12px;box-sizing:border-box;box-shadow:0 1px 2px rgba(0,0,0,.07);"></div>
<div class="t" style="left:1014.10px;top:516.00px;font-size:13.71px;line-height:13.71px;letter-spacing:0.139px;color:#4b5060;-webkit-text-stroke:0.35px #4b5060;">Fan</div>
<svg style="position:absolute;left:1056.0px;top:512.36px;" width="19.31" height="19.31" viewBox="0 0 24 24" fill="none" stroke="#5a6070" stroke-width="2" stroke-linecap="round" stroke-linejoin="round"><path d="M2.062 12.348a1 1 0 0 1 0-.696 10.75 10.75 0 0 1 19.876 0 1 1 0 0 1 0 .696 10.75 10.75 0 0 1-19.876 0"/><circle cx="12" cy="12" r="3"/></svg>
<div class="t" style="left:1204.80px;top:515.00px;font-size:16.21px;line-height:16.21px;letter-spacing:0.156px;color:#6b7280;">No tenants</div>
<div style="position:absolute;left:1407px;top:510px;width:72px;height:25.700000000000045px;background:#f59e0b;border-radius:13px;box-shadow:0 1px 2px rgba(0,0,0,.08);"></div>
<div class="t" style="left:1420.60px;top:515.00px;font-size:14.04px;line-height:14.04px;letter-spacing:0.047px;color:#1a1a1a;font-weight:700;">Vacant</div>
<div style="position:absolute;left:1610px;top:510px;width:97px;height:26px;background:#17a085;border-radius:13px;box-shadow:0 1px 2px rgba(0,0,0,.08);"></div>
<div class="t" style="left:1623.00px;top:516.00px;font-size:13.86px;line-height:13.86px;letter-spacing:-0.057px;color:#fff;font-weight:700;">2 Available</div>
<div style="position:absolute;left:1813px;top:508px;width:30px;height:27.5px;background:#f9fafb;border:1px solid #e3e5ea;border-radius:12px;box-sizing:border-box;box-shadow:0 1px 2px rgba(0,0,0,.06);"></div>
<div style="position:absolute;left:1821.2px;top:519.7px;width:3.599999999999909px;height:3.599999999999909px;background:#0a0a0a;border-radius:50%;"></div>
<div style="position:absolute;left:1826.7px;top:519.7px;width:3.599999999999909px;height:3.599999999999909px;background:#0a0a0a;border-radius:50%;"></div>
<div style="position:absolute;left:1832.4px;top:519.7px;width:3.599999999999909px;height:3.599999999999909px;background:#0a0a0a;border-radius:50%;"></div>
<div style="position:absolute;left:264.4px;top:513.3px;width:65.20000000000005px;height:19.700000000000045px;background:#e0f2fe;border-radius:10px;box-shadow:0 1px 2px rgba(0,0,0,.08);"></div>
<div class="t" style="left:272.20px;top:518.00px;font-size:11.96px;line-height:11.96px;letter-spacing:-0.029px;color:#0c6aa6;">Bed-wise</div>
<div class="t" style="left:220.50px;top:570.00px;font-size:14.15px;line-height:14.15px;letter-spacing:0.155px;color:#6b7280;">Total:</div>
<div class="t" style="left:258.60px;top:571.00px;font-size:13.83px;line-height:13.83px;letter-spacing:0.000px;color:#111;font-weight:700;">3</div>
<div class="t" style="left:285.90px;top:571.00px;font-size:13.82px;line-height:13.82px;letter-spacing:-0.003px;color:#6b7280;">Showing</div>
<div class="t" style="left:342.80px;top:571.00px;font-size:13.83px;line-height:13.83px;letter-spacing:0.000px;color:#111;font-weight:700;">1</div>
<div class="t" style="left:351.80px;top:571.00px;font-size:13.83px;line-height:13.83px;letter-spacing:0.000px;color:#111;font-weight:700;">-</div>
<div class="t" style="left:360.70px;top:571.00px;font-size:13.83px;line-height:13.83px;letter-spacing:0.000px;color:#111;font-weight:700;">3</div>
<div class="t" style="left:371.60px;top:571.00px;font-size:13.83px;line-height:13.83px;letter-spacing:0.000px;color:#6b7280;">of</div>
<div class="t" style="left:388.00px;top:571.00px;font-size:13.83px;line-height:13.83px;letter-spacing:0.000px;color:#111;font-weight:700;">3</div>
<div style="position:absolute;left:1639px;top:558px;width:38px;height:38px;background:#f9fafb;border:1px solid #eceef1;border-radius:13px;box-sizing:border-box;box-shadow:0 1px 2px rgba(0,0,0,.04);"></div>
<svg style="position:absolute;left:1649.0px;top:568.3px;" width="18" height="18" viewBox="0 0 24 24" fill="none" stroke="#5f6673" stroke-width="1.9" stroke-linecap="round" stroke-linejoin="round"><path d="m11 17-5-5 5-5"/><path d="m18 17-5-5 5-5"/></svg>
<div style="position:absolute;left:1682px;top:558px;width:38px;height:38px;background:#f9fafb;border:1px solid #eceef1;border-radius:13px;box-sizing:border-box;box-shadow:0 1px 2px rgba(0,0,0,.04);"></div>
<svg style="position:absolute;left:1692.0px;top:568.3px;" width="18" height="18" viewBox="0 0 24 24" fill="none" stroke="#5f6673" stroke-width="1.9" stroke-linecap="round" stroke-linejoin="round"><path d="m15 18-6-6 6-6"/></svg>
<div style="position:absolute;left:1814px;top:558px;width:38px;height:38px;background:#f9fafb;border:1px solid #eceef1;border-radius:13px;box-sizing:border-box;box-shadow:0 1px 2px rgba(0,0,0,.04);"></div>
<svg style="position:absolute;left:1824.0px;top:568.3px;" width="18" height="18" viewBox="0 0 24 24" fill="none" stroke="#5f6673" stroke-width="1.9" stroke-linecap="round" stroke-linejoin="round"><path d="m9 18 6-6-6-6"/></svg>
<div style="position:absolute;left:1858px;top:558px;width:38px;height:38px;background:#f9fafb;border:1px solid #eceef1;border-radius:13px;box-sizing:border-box;box-shadow:0 1px 2px rgba(0,0,0,.04);"></div>
<svg style="position:absolute;left:1868.0px;top:568.3px;" width="18" height="18" viewBox="0 0 24 24" fill="none" stroke="#5f6673" stroke-width="1.9" stroke-linecap="round" stroke-linejoin="round"><path d="m6 17 5-5-5-5"/><path d="m13 17 5-5-5-5"/></svg>
<div class="t" style="left:1735.60px;top:570.00px;font-size:13.44px;line-height:13.44px;letter-spacing:-0.413px;color:#111;-webkit-text-stroke:0.55px #111;">Page 1 of 1</div>
</body></html>
